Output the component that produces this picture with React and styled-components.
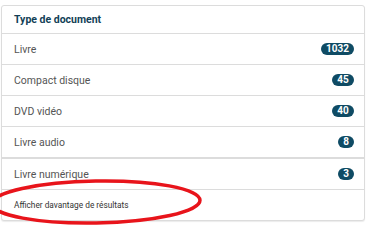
import React from "react";
import styled, { createGlobalStyle } from "styled-components";

const Global = createGlobalStyle`
  html, body { margin: 0; padding: 0; background: #fff; }
  body { font-family: Roboto, "Liberation Sans", Arial, sans-serif; }
`;

const Stage = styled.div`
  position: relative;
  width: 370px;
  height: 226px;
  padding: 5px 0 0 1px;
  box-sizing: border-box;
`;

const Card = styled.div`
  width: 364px;
  box-sizing: border-box;
  border: 1px solid #dcdcdc;
  border-radius: 3px;
  box-shadow: 0 1px 1px rgba(0, 0, 0, 0.08);
  background: #fff;
`;

const Header = styled.div`
  height: 27px;
  display: flex;
  align-items: center;
  padding: 0 12px;
  font-size: 10.5px;
  font-weight: 700;
  color: #123f57;
  border-bottom: 1px solid #dcdcdc;
`;

const Row = styled.div`
  height: 30px;
  display: flex;
  align-items: center;
  justify-content: space-between;
  padding: 0 10px 0 12px;
  border-bottom: ${(p) => (p.$thick ? "2px" : "1px")} solid #dcdcdc;
  font-size: 10.5px;
  color: #555;
  &:last-child { border-bottom: none; }
`;

const MoreRow = styled(Row)`
  font-size: 8.3px;
  color: #333;
  height: 30px;
`;

const Badge = styled.span`
  display: inline-flex;
  align-items: center;
  justify-content: center;
  min-width: 12px;
  height: 12px;
  padding: 0 ${(p) => (p.$wide ? "5px" : "2px")};
  border-radius: 7px;
  background: #0f4b64;
  color: #fff;
  font-size: 10px;
  font-weight: 700;
  line-height: 1;
`;

const Marker = styled.svg`
  position: absolute;
  left: 0;
  top: 176px;
  pointer-events: none;
`;

const items = [
  { label: "Livre", count: "1032" },
  { label: "Compact disque", count: "45" },
  { label: "DVD vidéo", count: "40" },
  { label: "Livre audio", count: "8", thick: true },
  { label: "Livre numérique", count: "3" },
];

export default function App() {
  return (
    <>
      <Global />
      <Stage>
        <Card>
          <Header>Type de document</Header>
          {items.map((it) => (
            <Row key={it.label} $thick={it.thick}>
              <span>{it.label}</span>
              <Badge $wide={it.count.length > 1}>{it.count}</Badge>
            </Row>
          ))}
          <MoreRow>Afficher davantage de résultats</MoreRow>
        </Card>
        <Marker width="210" height="50" viewBox="0 0 210 50">
          <ellipse
            cx="96"
            cy="26"
            rx="104"
            ry="21"
            fill="none"
            stroke="#e8141b"
            strokeWidth="3.5"
            transform="rotate(-1 96 26)"
          />
        </Marker>
      </Stage>
    </>
  );
}
